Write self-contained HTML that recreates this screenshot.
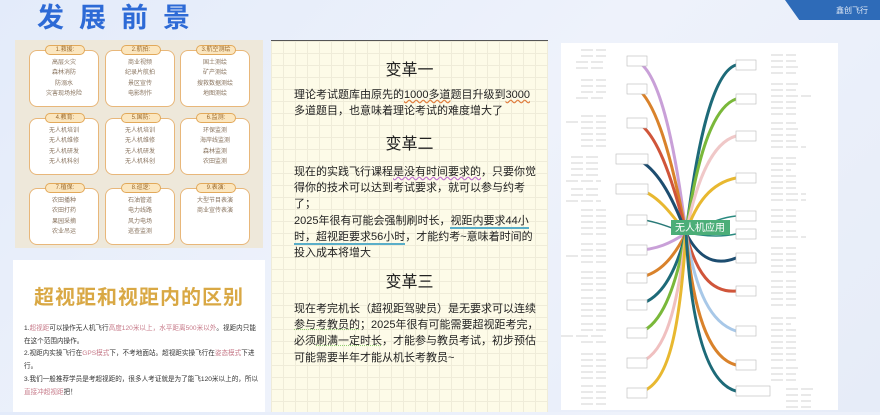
<!DOCTYPE html>
<html><head><meta charset="utf-8"><style>
*{margin:0;padding:0;box-sizing:border-box}
body{width:880px;height:412px;overflow:hidden;background:linear-gradient(135deg,#e3ebfa 0%,#eef2fb 50%,#e6ecf8 100%);font-family:"Liberation Sans","Noto Sans CJK SC",sans-serif;position:relative}
.title{position:absolute;left:37px;top:2px;font-size:27px;font-weight:bold;color:#2d6ad6;letter-spacing:15px;line-height:32px}
.corner{position:absolute;right:0;top:0;width:95px;height:20px;background:#2e6bb8;clip-path:polygon(0 0,100% 0,100% 100%,15% 100%)}
.corner span{position:absolute;right:12px;top:5px;font-size:8px;color:#dfe8f5}
.lp{position:absolute;left:15px;top:40px;width:248px;height:208px;background:#eee8da}
.card{position:absolute;width:70px;height:57px;background:#fff;border:1.5px solid #e8b77a;border-radius:8px;text-align:center;font-size:6px;color:#8a7560;line-height:10.3px;padding-top:7px}
.pill{position:absolute;left:15px;top:-6px;width:40px;height:10px;background:#fbe6bf;border:1px solid #e2a95a;border-radius:6px;font-size:6px;line-height:8px;color:#9b6a2d}
.lb{position:absolute;left:13px;top:260px;width:252px;height:152px;background:#fff}
.lb h2{position:absolute;top:21px;width:100%;text-align:center;font-size:20px;color:#d9a844;font-weight:bold;letter-spacing:1px}
.lb p{position:absolute;left:11px;width:236px;font-size:6.6px;line-height:12.7px;color:#333;top:63px}
.lb em{font-style:normal;color:#c77b8a}
.mp{position:absolute;left:271px;top:40px;width:277px;height:372px;background-color:#fdfbe8;background-image:linear-gradient(#efecd9 1px,transparent 1px),linear-gradient(90deg,#efecd9 1px,transparent 1px);background-size:12px 12px;border-top:1px solid #555}
.mp h3{position:absolute;width:100%;text-align:center;font-size:16px;font-weight:normal;color:#222}
.mp p{position:absolute;left:23px;width:245px;font-size:11px;line-height:16.2px;color:#222}
.u1{text-decoration:underline wavy #e07a3a}
.u2{text-decoration:underline wavy #c070d0}
.u3{border-bottom:2px solid #5aaec8}
.u4{text-decoration:underline dotted #8fcf70}
.rp{position:absolute;left:561px;top:43px;width:277px;height:367px;background:#fff}
</style></head><body>
<div class="title">发展前景</div>
<div class="corner"><span>鑫创飞行</span></div>
<div class="lp">
<div class="card" style="left:14px;top:10px"><div class="pill">1.救援:</div>高层火灾<br>森林消防<br>防溺水<br>灾害现场抢险</div>
<div class="card" style="left:90px;top:10px"><div class="pill">2.航拍:</div>商业视频<br>纪录片航拍<br>景区宣传<br>电影制作</div>
<div class="card" style="left:165px;top:10px"><div class="pill">3.航空测绘</div>国土测绘<br>矿产测绘<br>搜救数据测绘<br>地图测绘</div>
<div class="card" style="left:14px;top:78px"><div class="pill">4.教育:</div>无人机培训<br>无人机维修<br>无人机研发<br>无人机科创</div>
<div class="card" style="left:90px;top:78px"><div class="pill">5.国防:</div>无人机培训<br>无人机维修<br>无人机研发<br>无人机科创</div>
<div class="card" style="left:165px;top:78px"><div class="pill">6.监测:</div>环保监测<br>海岸线监测<br>森林监测<br>农田监测</div>
<div class="card" style="left:14px;top:148px"><div class="pill">7.植保:</div>农田播种<br>农田打药<br>果园采摘<br>农业吊运</div>
<div class="card" style="left:90px;top:148px"><div class="pill">8.巡逻:</div>石油管道<br>电力线路<br>风力电场<br>巡查监测</div>
<div class="card" style="left:165px;top:148px"><div class="pill">9.表演:</div>大型节目表演<br>商业宣传表演</div>
</div>
<div class="lb"><h2>超视距和视距内的区别</h2>
<p>1.<em>超视距</em>可以操作无人机飞行<em>高度120米以上，水平距离500米以外</em>。视距内只能在这个范围内操作。<br>2.视距内实操飞行在<em>GPS模式</em>下，不考地面站。超视距实操飞行在<em>姿态模式</em>下进行。<br>3.我们一般推荐学员是考超视距的，很多人考证就是为了能飞120米以上的，所以<em>直接冲超视距</em>把！</p></div>
<div class="mp">
<h3 style="top:15px">变革一</h3>
<p style="top:46px">理论考试题库由原先的<span class="u1">1000多道</span>题目升级到<span class="u1">3000</span>多道题目，也意味着理论考试的难度增大了</p>
<h3 style="top:89px">变革二</h3>
<p style="top:123px">现在的实践飞行课程<span class="u2">是没有时间要求的</span>，只要你觉得你的技术可以达到考试要求，就可以参与约考了；<br>2025年很有可能会强制刷时长，<span class="u3">视距内要求44小时，超视距要求56小时</span>，才能约考~意味着时间的投入成本将增大</p>
<h3 style="top:227px">变革三</h3>
<p style="top:260px">现在考完机长（超视距驾驶员）是无要求可以连续<span class="u4">参与考教员的</span>；2025年很有可能需要超视距考完，必须<span class="u4">刷满一定时长</span>，才能参与教员考试，初步预估可能需要半年才能从机长考教员~</p>
</div>
<div class="rp">
<svg width="277" height="367" viewBox="0 0 277 367" fill="none" stroke-width="3">
<g stroke-linecap="round">
<path d="M125 190 C115 110 100 30 76 18" stroke="#c9a0d8"/>
<path d="M125 190 C110 110 95 60 76 45" stroke="#d9822b"/>
<path d="M125 190 C110 130 95 90 76 79" stroke="#d0553a"/>
<path d="M125 190 C110 150 95 125 76 116" stroke="#1d4d70"/>
<path d="M125 190 C110 170 95 150 76 146" stroke="#e8b830"/>
<path d="M125 190 C110 185 95 178 76 176" stroke="#2a7a78" stroke-width="1.5"/>
<path d="M125 190 C110 200 95 207 76 207" stroke="#c9a0d8"/>
<path d="M125 190 C110 220 95 232 76 235" stroke="#d9822b"/>
<path d="M125 190 C112 240 95 258 76 262" stroke="#1d6a78"/>
<path d="M125 190 C112 260 95 286 76 290" stroke="#7ab83a"/>
<path d="M125 190 C115 280 100 315 76 320" stroke="#f0c0c0"/>
<path d="M125 190 C118 300 105 345 76 350" stroke="#e8b830"/>
<path d="M125 190 C135 110 150 30 175 22" stroke="#1d6a78"/>
<path d="M125 190 C135 120 150 65 175 56" stroke="#7ab83a"/>
<path d="M125 190 C135 140 150 100 175 93" stroke="#f0c8c8"/>
<path d="M125 190 C135 160 150 140 175 135" stroke="#e8b830"/>
<path d="M125 190 C140 185 155 175 175 173" stroke="#2a8a80" stroke-width="1.5"/>
<path d="M125 190 C140 192 155 195 175 191" stroke="#2a8a80" stroke-width="1.5"/>
<path d="M125 190 C135 210 150 225 175 215" stroke="#1d4d70"/>
<path d="M125 190 C135 230 150 250 175 248" stroke="#d0553a"/>
<path d="M125 190 C135 250 150 280 175 288" stroke="#a8c8e8"/>
<path d="M125 190 C132 270 148 315 175 322" stroke="#d9822b"/>
<path d="M125 190 C130 280 145 340 175 348" stroke="#1d6a78"/>
</g>
<rect x="110" y="177" width="59" height="15" fill="#4cae78" stroke="none"/>
<text x="139" y="188" font-size="10" fill="#fff" text-anchor="middle" stroke="none" font-family="Liberation Sans,Noto Sans CJK SC,sans-serif">无人机应用</text>
<g fill="#fff" stroke="#bbb" stroke-width="0.6">
<rect x="66" y="13" width="20" height="10"/><rect x="66" y="41" width="20" height="10"/><rect x="66" y="75" width="20" height="10"/><rect x="55" y="111" width="32" height="10"/><rect x="55" y="141" width="32" height="10"/><rect x="66" y="172" width="20" height="10"/><rect x="66" y="202" width="20" height="10"/><rect x="66" y="230" width="20" height="10"/><rect x="66" y="257" width="20" height="10"/><rect x="66" y="285" width="20" height="10"/><rect x="66" y="315" width="20" height="10"/><rect x="66" y="345" width="20" height="10"/>
<rect x="175" y="17" width="20" height="10"/><rect x="175" y="51" width="20" height="10"/><rect x="175" y="88" width="20" height="10"/><rect x="175" y="130" width="20" height="10"/><rect x="175" y="168" width="20" height="10"/><rect x="175" y="186" width="20" height="10"/><rect x="175" y="210" width="20" height="10"/><rect x="175" y="243" width="20" height="10"/><rect x="175" y="283" width="20" height="10"/><rect x="175" y="317" width="20" height="10"/><rect x="175" y="343" width="34" height="10"/>
</g>
<g stroke="#dcdcdc" stroke-width="1.3" stroke-dasharray="12 3">
<path d="M20 7h25M20 13h25M15 19h30M15 25h30M20 37h25M20 43h25M20 49h25M15 55h30M20 73h25M5 79h40M20 85h25M20 91h25M20 97h25M20 103h25M10 114h30M10 120h30M10 126h30M10 132h30M5 138h35M10 146h30M10 152h30M5 158h35M20 167h25M20 173h25M20 179h25M20 185h25M20 191h25M20 201h25M20 207h25M5 213h40M20 219h25M20 229h25M20 235h25M20 241h25M20 247h25M20 255h25M20 261h25M20 267h25M20 273h25M20 281h25M20 287h25M0 293h45M20 299h25M20 311h25M20 317h25M20 323h25M20 329h25M20 335h25M20 343h25M20 349h25M20 355h25M20 361h25"/>
<path d="M210 12h25M210 18h25M210 24h30M210 30h25M210 41h30M210 47h25M210 53h40M210 59h25M210 65h25M210 71h25M210 80h25M210 86h30M210 92h25M210 98h25M210 104h35M210 115h25M210 121h25M210 127h20M210 133h25M210 139h25M210 145h25M210 151h35M210 157h35M210 167h25M210 173h25M210 179h25M210 188h25M210 194h35M210 205h25M210 211h25M210 217h25M210 223h25M210 229h25M210 238h25M210 244h25M210 250h25M210 256h25M210 262h25M210 275h25M210 281h20M210 287h25M210 293h25M210 299h25M210 305h25M210 311h25M210 317h25M210 325h30M210 331h25M210 337h25M225 346h30M225 352h25M225 358h25M225 364h25"/>
</g>
</svg>
</div>
</body></html>
